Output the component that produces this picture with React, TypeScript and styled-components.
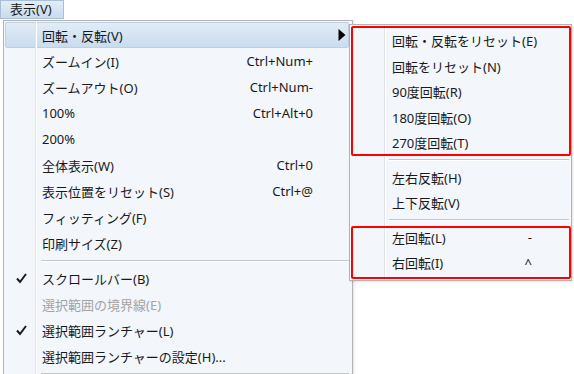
import React from "react";
import styled, { createGlobalStyle } from "styled-components";

const GlobalStyle = createGlobalStyle`
  html, body {
    margin: 0;
    padding: 0;
    background: #ffffff;
    overflow: hidden;
  }
  body {
    font-family: "Noto Sans", "Noto Sans CJK JP", sans-serif;
    font-size: 13px;
    color: #1a1a1a;
  }
`;

const Page = styled.div`
  width: 574px;
  height: 374px;
  overflow: hidden;
  display: flex;
  flex-direction: column;
`;

const MenuBar = styled.div`
  display: flex;
  height: 19px;
`;

const MenuBarButton = styled.div`
  box-sizing: border-box;
  width: 64px;
  height: 19px;
  padding-left: 9px;
  display: flex;
  align-items: center;
  background: linear-gradient(#e3edf7, #c9dbee);
  border: 1px solid #a9bfd6;
  line-height: 1;
`;

const Dropdowns = styled.div`
  display: flex;
  align-items: flex-start;
  margin-top: 1px;
  padding-left: 3px;
`;

const Menu = styled.div<{ width: number }>`
  position: relative;
  flex: none;
  width: ${(p) => p.width}px;
  box-sizing: border-box;
  background: #f3f6fb;
  border: 1px solid #b4b4b4;
  box-shadow: 1px 1px 2px rgba(0, 0, 0, 0.12);
`;

const MainMenu = styled(Menu)`
  padding: 1px 3px 20px 1px;
`;

const SubMenu = styled(Menu)`
  margin-left: -4px;
  margin-top: 4px;
  z-index: 1;
  padding: 3px 1px 4px 0;
`;

const Gutter = styled.div<{ x: number }>`
  position: absolute;
  top: 0;
  bottom: 0;
  left: ${(p) => p.x}px;
  width: 1px;
  background: #e0e3e8;
  border-right: 1px solid #ffffff;
`;

const Item = styled.div<{ h: number; active?: boolean; disabled?: boolean; icon: number; pr: number }>`
  box-sizing: border-box;
  height: ${(p) => p.h}px;
  display: grid;
  grid-template-columns: ${(p) => p.icon}px 1fr auto 14px;
  align-items: center;
  padding-right: ${(p) => p.pr}px;
  color: ${(p) => (p.disabled ? "#a3a3a3" : "#1a1a1a")};
  white-space: nowrap;
  border: 1px solid ${(p) => (p.active ? "#bcd0e5" : "transparent")};
  border-radius: 2px;
  background: ${(p) => (p.active ? "linear-gradient(#e2ecf7, #cadcee)" : "transparent")};
`;

const IconCell = styled.div`
  display: flex;
  justify-content: center;
  padding-right: 6px;
`;

const Label = styled.span``;

const Shortcut = styled.span`
  text-align: right;
`;

const ArrowCell = styled.div`
  display: flex;
  justify-content: flex-end;
  padding-right: 3px;
  transform: translateX(22px);
`;

const Separator = styled.div<{ ml: number; mr: number }>`
  height: 9px;
  display: flex;
  align-items: center;
  margin-left: ${(p) => p.ml}px;
  margin-right: ${(p) => p.mr}px;

  &::after {
    content: "";
    flex: 1;
    height: 1px;
    background: #c6c6c6;
    border-bottom: 1px solid #ffffff;
  }
`;

const Callout = styled.div<{ top: number; height: number }>`
  position: absolute;
  left: 1px;
  right: 0;
  top: ${(p) => p.top}px;
  height: ${(p) => p.height}px;
  box-sizing: border-box;
  border: 2px solid #ff0000;
  border-radius: 2px;
  pointer-events: none;
`;

type Entry = { label: string; shortcut?: string; checked?: boolean; disabled?: boolean; sub?: boolean } | "sep";

const mainItems: Entry[] = [
  { label: "回転・反転(V)", sub: true },
  { label: "ズームイン(I)", shortcut: "Ctrl+Num+" },
  { label: "ズームアウト(O)", shortcut: "Ctrl+Num-" },
  { label: "100%", shortcut: "Ctrl+Alt+0" },
  { label: "200%" },
  { label: "全体表示(W)", shortcut: "Ctrl+0" },
  { label: "表示位置をリセット(S)", shortcut: "Ctrl+@" },
  { label: "フィッティング(F)" },
  { label: "印刷サイズ(Z)" },
  "sep",
  { label: "スクロールバー(B)", checked: true },
  { label: "選択範囲の境界線(E)", disabled: true },
  { label: "選択範囲ランチャー(L)", checked: true },
  { label: "選択範囲ランチャーの設定(H)..." },
  "sep",
];

const subItems: Entry[] = [
  { label: "回転・反転をリセット(E)" },
  { label: "回転をリセット(N)" },
  { label: "90度回転(R)" },
  { label: "180度回転(O)" },
  { label: "270度回転(T)" },
  "sep",
  { label: "左右反転(H)" },
  { label: "上下反転(V)" },
  "sep",
  { label: "左回転(L)", shortcut: "-" },
  { label: "右回転(I)", shortcut: "^" },
];

function CheckMark() {
  return (
    <svg width="11" height="11" viewBox="0 0 11 11">
      <path d="M1 5.5 L4 9 L10 1" fill="none" stroke="#1a1a1a" strokeWidth="2" />
    </svg>
  );
}

function SubArrow() {
  return (
    <svg width="8" height="14" viewBox="0 0 8 14">
      <path d="M0.5 1 L7.5 7 L0.5 13 Z" fill="#000" />
    </svg>
  );
}

function App() {
  return (
    <>
      <GlobalStyle />
      <Page>
        <MenuBar>
          <MenuBarButton>表示(V)</MenuBarButton>
        </MenuBar>

        <Dropdowns>
          <MainMenu width={350}>
            <Gutter x={31} />
            {mainItems.map((it, i) =>
              it === "sep" ? (
                <Separator key={i} ml={36} mr={0} />
              ) : (
                <Item key={i} h={26} icon={36} pr={21} active={it.sub} disabled={it.disabled}>
                  <IconCell>{it.checked && <CheckMark />}</IconCell>
                  <Label>{it.label}</Label>
                  <Shortcut>{it.shortcut}</Shortcut>
                  <ArrowCell>{it.sub && <SubArrow />}</ArrowCell>
                </Item>
              )
            )}
          </MainMenu>

          <SubMenu width={223}>
            <Gutter x={34} />
            {subItems.map((it, i) =>
              it === "sep" ? (
                <Separator key={i} ml={39} mr={1} />
              ) : (
                <Item key={i} h={25.5} icon={41} pr={23}>
                  <IconCell />
                  <Label>{it.label}</Label>
                  <Shortcut>{it.shortcut}</Shortcut>
                  <ArrowCell />
                </Item>
              )
            )}
            <Callout top={1} height={130} />
            <Callout top={201} height={53} />
          </SubMenu>
        </Dropdowns>
      </Page>
    </>
  );
}

export default App;
